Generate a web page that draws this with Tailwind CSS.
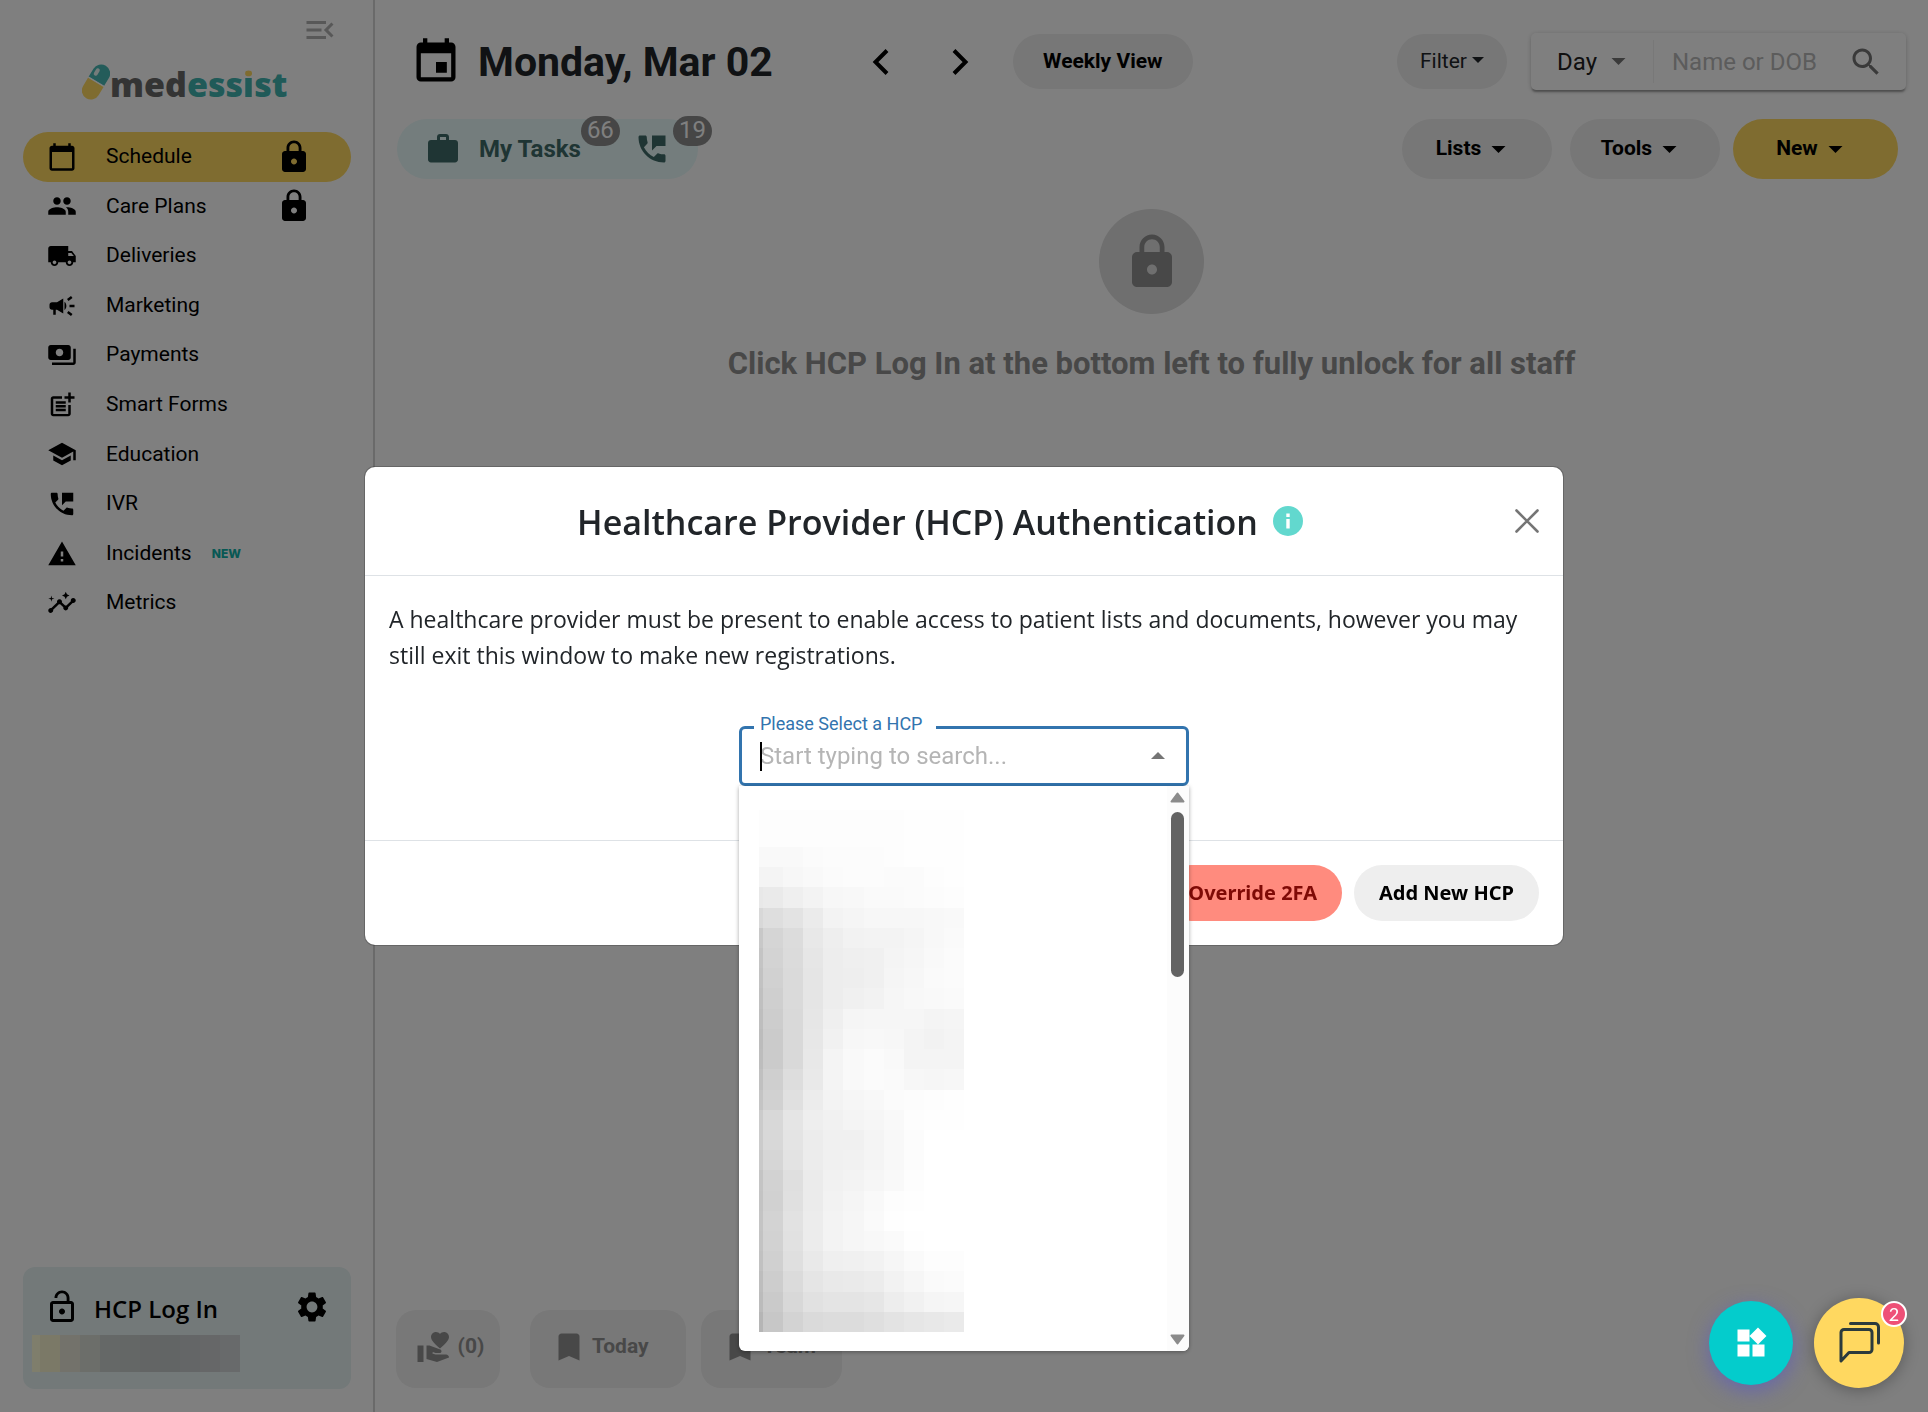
<!DOCTYPE html>
<html lang="en">
<head>
  <meta charset="UTF-8" />
  <meta name="viewport" content="width=device-width, initial-scale=1.0"/>
  <title>MedEssist - Schedule</title>
  <script src="https://cdn.jsdelivr.net/npm/@tailwindcss/browser@4"></script>
</head>
<body class="min-h-screen bg-white font-[Roboto,sans-serif] text-black">

  <!-- icon sprite -->
  <svg class="hidden" aria-hidden="true">
    <symbol id="i-menu-open" viewBox="0 0 24 24"><path d="M3 18h13v-2H3v2zm0-5h10v-2H3v2zm0-7v2h13V6H3zm18 9.59L17.42 12 21 8.41 19.59 7l-5 5 5 5L21 15.59z"/></symbol>
    <symbol id="i-calendar" viewBox="0 0 24 24"><path d="M20 3h-1V1h-2v2H7V1H5v2H4c-1.1 0-2 .9-2 2v16c0 1.1.9 2 2 2h16c1.1 0 2-.9 2-2V5c0-1.1-.9-2-2-2zm0 18H4V8h16v13z"/></symbol>
    <symbol id="i-people" viewBox="0 0 24 24"><path d="M16 11c1.66 0 2.99-1.34 2.99-3S17.66 5 16 5c-1.66 0-3 1.34-3 3s1.34 3 3 3zm-8 0c1.66 0 2.99-1.34 2.99-3S9.66 5 8 5C6.34 5 5 6.34 5 8s1.34 3 3 3zm0 2c-2.33 0-7 1.17-7 3.5V19h14v-2.5c0-2.33-4.67-3.5-7-3.5zm8 0c-.29 0-.62.02-.97.05 1.16.84 1.97 1.97 1.97 3.45V19h6v-2.5c0-2.33-4.67-3.5-7-3.5z"/></symbol>
    <symbol id="i-truck" viewBox="0 0 24 24"><path d="M20 8h-3V4H3c-1.1 0-2 .9-2 2v11h2c0 1.66 1.34 3 3 3s3-1.34 3-3h6c0 1.66 1.34 3 3 3s3-1.34 3-3h2v-5l-3-4zM6 18.5c-.83 0-1.5-.67-1.5-1.5s.67-1.5 1.5-1.5 1.5.67 1.5 1.5-.67 1.5-1.5 1.5zm13.5-9 1.96 2.5H17V9.5h2.5zm-1.5 9c-.83 0-1.5-.67-1.5-1.5s.67-1.5 1.5-1.5 1.5.67 1.5 1.5-.67 1.5-1.5 1.5z"/></symbol>
    <symbol id="i-campaign" viewBox="0 0 24 24"><path d="M18 11v2h4v-2h-4zm-2 6.61c.96.71 2.21 1.65 3.2 2.39.4-.53.8-1.07 1.2-1.6-.99-.74-2.24-1.68-3.2-2.4-.4.54-.8 1.08-1.2 1.61zM20.4 5.6c-.4-.53-.8-1.07-1.2-1.6-.99.74-2.24 1.68-3.2 2.4.4.53.8 1.07 1.2 1.6.96-.72 2.21-1.65 3.2-2.4zM4 9c-1.1 0-2 .9-2 2v2c0 1.1.9 2 2 2h1v4h2v-4h1l5 3V6L8 9H4zm11.5 3c0-1.33-.58-2.53-1.5-3.35v6.69c.92-.81 1.5-2.01 1.5-3.34z"/></symbol>
    <symbol id="i-payments" viewBox="0 0 24 24"><path d="M19 14V6c0-1.1-.9-2-2-2H3c-1.1 0-2 .9-2 2v8c0 1.1.9 2 2 2h14c1.1 0 2-.9 2-2zm-9-1c-1.66 0-3-1.34-3-3s1.34-3 3-3 3 1.34 3 3-1.34 3-3 3zm13-6v11c0 1.1-.9 2-2 2H4v-2h17V7h2z"/></symbol>
    <symbol id="i-post-add" viewBox="0 0 24 24"><path d="M17 19.22H5V7h7V5H5c-1.1 0-2 .9-2 2v12c0 1.1.9 2 2 2h12c1.1 0 2-.9 2-2v-7h-2v7.22zM19 2h-2v3h-3v2h3v3h2V7h3V5h-3V2zM7 9h8v2H7zM7 12h8v2H7zM7 15h8v2H7z"/></symbol>
    <symbol id="i-school" viewBox="0 0 24 24"><path d="M5 13.18v4L12 21l7-3.82v-4L12 17l-7-3.82zM12 3 1 9l11 6 9-4.91V17h2V9L12 3z"/></symbol>
    <symbol id="i-phone" viewBox="0 0 24 24"><path d="M20 15.5c-1.25 0-2.45-.2-3.57-.57-.35-.11-.74-.03-1.02.24l-2.2 2.2c-2.83-1.44-5.15-3.75-6.59-6.58l2.2-2.21c.28-.27.36-.66.25-1.01C8.7 6.45 8.5 5.25 8.5 4c0-.55-.45-1-1-1H4c-.55 0-1 .45-1 1 0 9.39 7.61 17 17 17 .55 0 1-.45 1-1v-3.5c0-.55-.45-1-1-1zM12 3v10l3-3h6V3h-9z"/></symbol>
    <symbol id="i-warning" viewBox="0 0 24 24"><path d="M1 21h22L12 2 1 21zm12-3h-2v-2h2v2zm0-4h-2v-4h2v4z"/></symbol>
    <symbol id="i-insights" viewBox="0 0 24 24"><path d="M21 8c-1.45 0-2.26 1.44-1.93 2.51l-3.55 3.56c-.3-.09-.74-.09-1.04 0l-2.55-2.55C12.27 10.45 11.46 9 10 9c-1.45 0-2.27 1.44-1.93 2.52l-4.56 4.55C2.44 15.74 1 16.55 1 18c0 1.1.9 2 2 2 1.45 0 2.26-1.44 1.93-2.51l4.55-4.56c.3.09.74.09 1.04 0l2.55 2.55C12.73 16.55 13.54 18 15 18c1.45 0 2.27-1.44 1.93-2.52l3.56-3.55C21.56 12.26 23 11.45 23 10c0-1.1-.9-2-2-2zM15 9l.94-2.07L18 6l-2.06-.93L15 3l-.92 2.07L12 6l2.08.93zM3.5 11 4 9l2-.5L4 8l-.5-2L3 8l-2 .5L3 9z"/></symbol>
    <symbol id="i-lock" viewBox="0 0 24 24"><path d="M18 8h-1V6c0-2.76-2.24-5-5-5S7 3.24 7 6v2H6c-1.1 0-2 .9-2 2v10c0 1.1.9 2 2 2h12c1.1 0 2-.9 2-2V10c0-1.1-.9-2-2-2zm-6 9c-1.1 0-2-.9-2-2s.9-2 2-2 2 .9 2 2-.9 2-2 2zm3.1-9H8.9V6c0-1.71 1.39-3.1 3.1-3.1 1.71 0 3.1 1.39 3.1 3.1v2z"/></symbol>
    <symbol id="i-lock-open" viewBox="0 0 24 24"><path d="M12 17c1.1 0 2-.9 2-2s-.9-2-2-2-2 .9-2 2 .9 2 2 2zm6-9h-1V6c0-2.76-2.24-5-5-5S7 3.24 7 6h1.9c0-1.71 1.39-3.1 3.1-3.1 1.71 0 3.1 1.39 3.1 3.1v2H6c-1.1 0-2 .9-2 2v10c0 1.1.9 2 2 2h12c1.1 0 2-.9 2-2V10c0-1.1-.9-2-2-2zm0 12H6V10h12v10z"/></symbol>
    <symbol id="i-settings" viewBox="0 0 24 24"><path d="M19.14 12.94c.04-.3.06-.61.06-.94 0-.32-.02-.64-.07-.94l2.03-1.58c.18-.14.23-.41.12-.61l-1.92-3.32c-.12-.22-.37-.29-.59-.22l-2.39.96c-.5-.38-1.03-.7-1.62-.94l-.36-2.54c-.04-.24-.24-.41-.48-.41h-3.84c-.24 0-.43.17-.47.41l-.36 2.54c-.59.24-1.13.57-1.62.94l-2.39-.96c-.22-.08-.47 0-.59.22L2.74 8.87c-.12.21-.08.47.12.61l2.03 1.58c-.05.3-.09.63-.09.94s.02.64.07.94l-2.03 1.58c-.18.14-.23.41-.12.61l1.92 3.32c.12.22.37.29.59.22l2.39-.96c.5.38 1.03.7 1.62.94l.36 2.54c.05.24.24.41.48.41h3.84c.24 0 .44-.17.47-.41l.36-2.54c.59-.24 1.13-.56 1.62-.94l2.39.96c.22.08.47 0 .59-.22l1.92-3.32c.12-.22.07-.47-.12-.61l-2.01-1.58zM12 15.6c-1.98 0-3.6-1.62-3.6-3.6s1.62-3.6 3.6-3.6 3.6 1.62 3.6 3.6-1.62 3.6-3.6 3.6z"/></symbol>
    <symbol id="i-event" viewBox="0 0 24 24"><path d="M17 12h-5v5h5v-5zM16 1v2H8V1H6v2H5c-1.11 0-1.99.9-1.99 2L3 19c0 1.1.89 2 2 2h14c1.1 0 2-.9 2-2V5c0-1.1-.9-2-2-2h-1V1h-2zm3 18H5V8h14v11z"/></symbol>
    <symbol id="i-work" viewBox="0 0 24 24"><path d="M20 6h-4V4c0-1.11-.89-2-2-2h-4c-1.11 0-2 .89-2 2v2H4c-1.11 0-1.99.89-1.99 2L2 19c0 1.11.89 2 2 2h16c1.11 0 2-.89 2-2V8c0-1.11-.89-2-2-2zm-6 0h-4V4h4v2z"/></symbol>
    <symbol id="i-search" viewBox="0 0 24 24"><path d="M15.5 14h-.79l-.28-.27C15.41 12.59 16 11.11 16 9.5 16 5.91 13.09 3 9.5 3S3 5.91 3 9.5 5.91 16 9.5 16c1.61 0 3.09-.59 4.23-1.57l.27.28v.79l5 4.99L20.49 19l-4.99-5zm-6 0C7.01 14 5 11.99 5 9.5S7.01 5 9.5 5 14 7.01 14 9.5 11.99 14 9.5 14z"/></symbol>
    <symbol id="i-volunteer" viewBox="0 0 24 24"><path d="M1 11h4v11H1zM16 3.25C16.65 2.49 17.66 2 18.7 2 20.55 2 22 3.45 22 5.3c0 2.27-2.91 4.9-6 7.7-3.09-2.81-6-5.44-6-7.7C10 3.45 11.45 2 13.3 2c1.04 0 2.05.49 2.7 1.25zM20 17h-7l-2.09-.73.33-.94L13 16h2.82c.65 0 1.18-.53 1.18-1.18 0-.49-.31-.93-.77-1.11L8.97 11H7v9.02L14 22l8.01-3c-.01-1.1-.9-2-2.01-2z"/></symbol>
    <symbol id="i-bookmark" viewBox="0 0 24 24"><path d="M17 3H7c-1.1 0-1.99.9-1.99 2L5 21l7-3 7 3V5c0-1.1-.9-2-2-2z"/></symbol>
    <symbol id="i-widgets" viewBox="0 0 24 24"><path d="M13 13v8h8v-8h-8zM3 21h8v-8H3v8zM3 3v8h8V3H3zm13.66-1.31L11 7.34 16.66 13l5.66-5.66-5.66-5.65z"/></symbol>
    <symbol id="i-caret" viewBox="0 0 14 7"><path d="M0 0h14L7 7z"/></symbol>
  </svg>

  <div class="flex min-h-screen">

    <!-- Sidebar -->
    <aside class="flex w-[375px] shrink-0 flex-col border-r-2 border-[#d4d4d4] pb-[23px]">
      <div class="flex justify-end pt-3 pr-[35px]">
        <button type="button" aria-label="Collapse menu"><svg class="size-9 fill-[#b0b0b0]"><use href="#i-menu-open"/></svg></button>
      </div>

      <a href="#" class="ml-[82px] flex h-[84px] items-start pt-4" aria-label="medessist">
        <svg class="h-[36px] w-[28px]" viewBox="0 0 28 36">
          <g transform="rotate(31 14 18)">
            <path d="M5 18h18v10a9 9 0 0 1-18 0z" fill="#ffd860"/>
            <path d="M5 17.4V8a9 9 0 0 1 18 0v9.400z" fill="#48b8b4"/>
            <path d="M5 17h18v1.400H5z" fill="#fff"/>
            <rect x="7.500" y="5" width="4" height="8" rx="2" fill="#e8f8f7"/>
          </g>
        </svg>
        <span class="font-['Open_Sans',sans-serif] text-[34px] leading-[40px] font-extrabold text-[#686868]">med<span class="text-[#40b4b0]">ess<span class="bg-[linear-gradient(#ffd860_38%,#40b4b0_38%)] bg-clip-text text-transparent">i</span>st</span></span>
      </a>

      <nav class="mx-[23px] mr-[22px] grid h-[496px] auto-rows-fr text-[21px]">
        <a href="#" class="flex items-center rounded-full bg-[#ffd860] pr-[39px] pl-6">
          <svg class="size-[30px]"><use href="#i-calendar"/></svg><span class="ml-[29px]">Schedule</span>
          <svg class="ml-auto size-9"><use href="#i-lock"/></svg>
        </a>
        <a href="#" class="flex items-center pr-[39px] pl-6">
          <svg class="size-[30px]"><use href="#i-people"/></svg><span class="ml-[29px]">Care Plans</span>
          <svg class="ml-auto size-9"><use href="#i-lock"/></svg>
        </a>
        <a href="#" class="flex items-center pl-6"><svg class="size-[30px]"><use href="#i-truck"/></svg><span class="ml-[29px]">Deliveries</span></a>
        <a href="#" class="flex items-center pl-6"><svg class="size-[30px]"><use href="#i-campaign"/></svg><span class="ml-[29px]">Marketing</span></a>
        <a href="#" class="flex items-center pl-6"><svg class="size-[30px]"><use href="#i-payments"/></svg><span class="ml-[29px]">Payments</span></a>
        <a href="#" class="flex items-center pl-6"><svg class="size-[30px]"><use href="#i-post-add"/></svg><span class="ml-[29px]">Smart Forms</span></a>
        <a href="#" class="flex items-center pl-6"><svg class="size-[30px]"><use href="#i-school"/></svg><span class="ml-[29px]">Education</span></a>
        <a href="#" class="flex items-center pl-6"><svg class="size-[30px]"><use href="#i-phone"/></svg><span class="ml-[29px]">IVR</span></a>
        <a href="#" class="flex items-center pl-6">
          <svg class="size-[30px]"><use href="#i-warning"/></svg><span class="ml-[29px]">Incidents</span>
          <span class="ml-5 font-[Inter,sans-serif] text-[12px] font-extrabold text-[#10b0a8]">NEW</span>
        </a>
        <a href="#" class="flex items-center pl-6"><svg class="size-[30px]"><use href="#i-insights"/></svg><span class="ml-[29px]">Metrics</span></a>
      </nav>

      <div class="mx-[23px] mr-[22px] mt-auto h-[122px] rounded-xl bg-[#e6f2f3] pt-[22px]">
        <div class="flex h-9 items-center pr-[21px] pl-[21px]">
          <svg class="size-9"><use href="#i-lock-open"/></svg>
          <button type="button" class="ml-[14px] pt-1 font-['Open_Sans',sans-serif] text-[24px] font-semibold">HCP Log In</button>
          <button type="button" class="ml-auto" aria-label="Settings"><svg class="size-9"><use href="#i-settings"/></svg></button>
        </div>
        <div id="hcp-name" class="mt-[10px] ml-[9px] grid h-[37px] w-[208px] grid-cols-[8px_repeat(10,minmax(0,1fr))]"></div>
      </div>
    </aside>

    <!-- Schedule -->
    <main class="flex min-w-0 flex-1 flex-col pt-[33px] pb-6">
      <div class="flex h-[57px] items-center pr-[22px] pl-[35px]">
        <svg class="size-[52px]"><use href="#i-event"/></svg>
        <h1 class="ml-4 text-[41px] leading-[48px] font-bold text-[#212529]">Monday, Mar 02</h1>
        <button type="button" class="ml-[88px] flex w-10 justify-center" aria-label="Previous day">
          <svg class="h-[26px] w-[17px]" viewBox="0 0 17 26"><path d="M15 1.500 3.500 13 15 24.500" fill="none" stroke="#000" stroke-width="4"/></svg>
        </button>
        <button type="button" class="ml-10 flex w-10 justify-center" aria-label="Next day">
          <svg class="h-[26px] w-[17px]" viewBox="0 0 17 26"><path d="M2 1.500 13.500 13 2 24.500" fill="none" stroke="#000" stroke-width="4"/></svg>
        </button>
        <button type="button" class="ml-8 h-[55px] w-[180px] rounded-full bg-[#eee] text-[21px] font-bold">Weekly View</button>

        <button type="button" class="ml-auto flex h-[55px] w-[110px] items-center justify-center gap-[5px] rounded-full bg-[#eee] text-[21px] text-[#212529]">Filter <svg class="-mt-1 h-[6px] w-3 fill-current"><use href="#i-caret"/></svg></button>
        <div class="ml-6 flex h-[57px] w-[375px] items-center rounded-[5px] bg-white pr-[22px] pl-[26px] shadow-[0_3px_2px_-1px_rgba(0,0,0,0.3),0_1px_5px_rgba(0,0,0,0.2)]">
          <select aria-label="View" class="w-[54px] appearance-none bg-transparent text-[24px] text-[#212121]"><option>Day</option></select>
          <svg class="h-[7px] w-[15px] fill-[#757575]"><use href="#i-caret"/></svg>
          <span class="ml-[27px] h-[43px] w-px bg-[#f0f0f0]"></span>
          <input type="search" aria-label="Search patients" placeholder="Name or DOB" class="ml-[18px] min-w-0 flex-1 bg-transparent text-[24px] outline-none placeholder:text-[#b8b8b8]" />
          <button type="button" class="shrink-0" aria-label="Search"><svg class="size-9 fill-[#757575]"><use href="#i-search"/></svg></button>
        </div>
      </div>

      <div class="mt-[29px] flex h-[60px] items-center pr-[30px] pl-[22px] text-[21px] font-bold">
        <div class="flex h-[60px] w-[301px] items-center justify-between rounded-full bg-[#e8fafa] pr-7 pl-7 text-[#3f6b68]">
          <button type="button" class="relative flex items-center gap-[18px] text-[24px]">
            <svg class="size-9 fill-current"><use href="#i-work"/></svg>My Tasks
            <span class="absolute -top-[15px] -right-[39px] h-[30px] w-[39px] rounded-full bg-[#8c8c8c] text-center text-[24px] leading-[28px] font-normal text-white">66</span>
          </button>
          <button type="button" class="relative" aria-label="Phone messages">
            <svg class="size-9 fill-current"><use href="#i-phone"/></svg>
            <span class="absolute -top-[15px] -right-[42px] h-[30px] w-[39px] rounded-full bg-[#8c8c8c] text-center text-[24px] leading-[28px] font-normal text-white">19</span>
          </button>
        </div>
        <button type="button" class="ml-auto flex h-[60px] w-[150px] items-center justify-center gap-[10px] rounded-full bg-[#eee] pr-3">Lists <svg class="h-[7px] w-[15px]"><use href="#i-caret"/></svg></button>
        <button type="button" class="ml-[18px] flex h-[60px] w-[150px] items-center justify-center gap-[10px] rounded-full bg-[#eee] pr-3">Tools <svg class="h-[7px] w-[15px]"><use href="#i-caret"/></svg></button>
        <button type="button" class="ml-[13px] flex h-[60px] w-[165px] items-center justify-center gap-[10px] rounded-full bg-[#ffd860] pr-3">New <svg class="h-[7px] w-[15px]"><use href="#i-caret"/></svg></button>
      </div>

      <div class="mt-[30px] flex flex-col items-center text-[#909090]">
        <div class="flex size-[105px] items-center justify-center rounded-full bg-[#dedede]"><svg class="size-[60px] fill-current"><use href="#i-lock"/></svg></div>
        <p class="mt-[30px] text-[31px] leading-[40px] font-bold">Click HCP Log In at the bottom left to fully unlock for all staff</p>
      </div>

      <div class="mt-auto flex pl-[21px] text-[21px] font-bold text-[#909090]">
        <button type="button" class="flex h-[78px] w-[104px] items-center justify-center gap-[6px] rounded-[20px] bg-[#f0f0f0] pb-1 pl-1"><svg class="size-9 fill-current"><use href="#i-volunteer"/></svg>(0)</button>
        <button type="button" class="ml-[30px] flex h-[78px] w-[156px] items-center rounded-[20px] bg-[#f0f0f0] pb-1 pl-[21px]"><svg class="size-9 fill-current"><use href="#i-bookmark"/></svg><span class="ml-[5px]">Today</span></button>
        <button type="button" class="ml-[15px] flex h-[78px] w-[141px] items-center rounded-[20px] bg-[#f0f0f0] pb-1 pl-[21px]"><svg class="size-9 fill-current"><use href="#i-bookmark"/></svg><span class="ml-[5px]">Team</span></button>
      </div>
    </main>
  </div>

  <!-- HCP authentication dialog -->
  <div class="fixed inset-0 flex items-center justify-center bg-black/50">
    <div role="dialog" aria-labelledby="hcp-title" class="w-full max-w-[1198px] rounded-[10px] bg-white font-['Open_Sans',sans-serif] text-[#212529] shadow-[0_0_0_1px_rgba(0,0,0,0.2)]">
      <div class="flex h-[109px] items-center border-b border-[#dee2e6] pr-6 pl-6">
        <div class="flex flex-1 items-center justify-center gap-[15px] pr-6">
          <h2 id="hcp-title" class="pt-[2px] text-[34px] leading-[44px] font-semibold">Healthcare Provider (HCP) Authentication</h2>
          <svg class="size-[30px]" viewBox="0 0 30 30"><circle cx="15" cy="15" r="15" fill="#62d8ce"/><path d="M13.300 13h3.400v9.500h-3.400zM13.300 7.500h3.400v3.400h-3.400z" fill="#fff"/></svg>
        </div>
        <button type="button" aria-label="Close">
          <svg class="size-6" viewBox="0 0 24 24"><path d="M1.500 1.500l21 21M22.500 1.500l-21 21" stroke="#757575" stroke-width="2.600" stroke-linecap="round"/></svg>
        </button>
      </div>

      <div class="px-6 pt-[25px] pb-[54px]">
        <p class="text-[23px] leading-[36px]">A healthcare provider must be present to enable access to patient lists and documents, however you may still exit this window to make new registrations.</p>

        <div class="relative mx-auto mt-[53px] h-[60px] w-[450px] font-[Roboto,sans-serif]">
          <label for="hcp" class="absolute -top-[14px] left-[15px] bg-white pr-[14px] pl-[6px] text-[18px] leading-6 text-[#3274ae]">Please Select a HCP</label>
          <input id="hcp" type="text" placeholder="Start typing to search..." class="h-full w-full rounded-[6px] border-[3px] border-[#3274ae] pr-14 pl-[18px] text-[24px] outline-none placeholder:text-[#b5b5b5]" />
          <span class="absolute top-4 left-[21px] h-[29px] w-[2px] bg-black"></span>
          <svg class="absolute top-[26px] right-6 h-[7px] w-[14px] rotate-180 fill-[#757575]"><use href="#i-caret"/></svg>

          <!-- provider list -->
          <div class="absolute top-full left-0 z-10 flex h-[565px] w-full rounded-b-[6px] bg-white shadow-[0_1px_4px_rgba(0,0,0,0.35)]">
            <div id="provider-names" class="mt-6 ml-5 grid h-[522px] w-[205px] grid-cols-[4px_repeat(10,minmax(0,1fr))] grid-rows-[37px_repeat(24,minmax(0,1fr))]"></div>
            <div class="ml-auto flex w-[22px] flex-col items-center rounded-br-[6px] bg-[#fcfcfc] pt-[6px] pr-[2px] pb-[6px]">
              <svg class="h-[11px] w-[15px]" viewBox="0 0 15 11"><path d="M7.500 1.500 13.500 9.500h-12z" fill="#8b8b8b" stroke="#8b8b8b" stroke-width="2" stroke-linejoin="round"/></svg>
              <div class="mt-[9px] h-[165px] w-[13px] rounded-full bg-[#636363]"></div>
              <svg class="mt-auto h-[11px] w-[15px]" viewBox="0 0 15 11"><path d="M7.500 9.500 13.500 1.500h-12z" fill="#8b8b8b" stroke="#8b8b8b" stroke-width="2" stroke-linejoin="round"/></svg>
            </div>
          </div>
        </div>
      </div>

      <div class="flex h-[105px] items-center justify-end gap-3 border-t border-[#dee2e6] pr-6 font-['Noto_Sans',sans-serif] text-[20px] font-bold">
        <button type="button" class="h-14 rounded-full bg-[#ff8b7e] px-[25px] text-[#7f0a06]">Override 2FA</button>
        <button type="button" class="h-14 rounded-full bg-[#eee] px-[25px] text-black">Add New HCP</button>
      </div>
    </div>
  </div>

  <!-- Floating buttons -->
  <div class="fixed right-6 bottom-6 flex items-center gap-[21px]">
    <button type="button" aria-label="Apps" class="flex size-[84px] items-center justify-center rounded-full bg-[#04cccc] shadow-[0_6px_20px_rgba(80,80,220,0.5)]"><svg class="size-9 fill-white"><use href="#i-widgets"/></svg></button>
    <button type="button" aria-label="Chat" class="relative flex size-[90px] items-center justify-center rounded-full bg-[#ffd860] shadow-[0_2px_16px_rgba(0,0,0,0.3)]">
      <svg class="size-[42px]" viewBox="0 0 42 42" fill="none" stroke="#2b3a3c" stroke-width="3" stroke-linejoin="round" stroke-linecap="round">
        <path d="M3 39V10.500a3 3 0 0 1 3-3h25a3 3 0 0 1 3 3v17a3 3 0 0 1-3 3H11z"/>
        <path d="M12.500 1.500H37a3.500 3.500 0 0 1 3.500 3.500v16"/>
      </svg>
      <span class="absolute top-[3px] -right-[3px] flex size-[26px] items-center justify-center rounded-full border-2 border-white bg-[#ee5077] font-[Lato,sans-serif] text-[18px] leading-none text-white">2</span>
    </button>
  </div>

  <script>
    // redacted names are drawn as a coarse mosaic, one colour per cell
    const HCP_NAME = ["fffcd8", "f6f3cf", "e6e5d6", "d8dcd4", "cbd1ce", "c8cecd", "c6cbca", "c4cacb", "c8cdce", "cccfd1", "d0d4d6"];

    const PROVIDERS = [
      "fd fd fd fd fd fd fd fd fe fe fe",
      "f9 f9 f9 fb fc fc fc fd fe fe fe",
      "f4 f4 f7 f9 fb fc fc fb fb fd fe",
      "e8 ea ef f3 f7 f8 fa fa fb fc fd",
      "d8 de e3 eb f3 f5 f7 f7 f7 f8 f9",
      "c8 d5 dc e8 ee f2 f3 f3 f5 f8 fa",
      "c4 d3 db e6 ed ef f0 f4 f6 f9 fb",
      "c2 d1 da e5 ed ee f0 f5 f7 fa fb",
      "c0 cf da e5 ed f0 f2 f6 f8 f9 fa",
      "be cd d9 e6 ef f5 f6 f6 f6 f4 f5",
      "bc cb d9 e7 f1 f7 f8 f7 f4 f2 f4",
      "bd cb d9 e8 f4 f9 fb f9 f4 f4 f4",
      "c0 cf dd e9 f4 f9 fb fa f7 f6 f7",
      "c4 d1 e0 ec f3 f6 f8 fb fc fd fe",
      "cb d8 e5 ee f1 f4 f6 f9 fd fe fe",
      "cb d8 e4 ec f0 f0 f4 f8 fc ff ff",
      "c9 d6 e3 ec f0 f1 f4 f8 fc ff ff",
      "c4 d2 df eb f1 f3 f6 f9 fd ff ff",
      "c3 d1 e0 eb f2 f5 f9 fd fe ff ff",
      "c4 d3 e2 ec f3 f6 fa fe ff ff ff",
      "c3 d2 e1 ec f3 f6 f8 fa fe ff ff",
      "c1 d0 df e9 ef f0 f2 f6 fa fd fd",
      "bd cd db e5 e9 ea ec f2 f6 fa fb",
      "bb ca d8 e1 e4 e4 e6 ed f1 f5 f6",
      "b5 c7 d3 da dc dc df e3 e6 e8 ea"
    ];

    function fillCells(id, colors) {
      const box = document.getElementById(id);
      colors.forEach((color) => {
        const cell = document.createElement("span");
        cell.style.background = "#" + color;
        box.appendChild(cell);
      });
    }

    fillCells("hcp-name", HCP_NAME);
    fillCells("provider-names", PROVIDERS.join(" ").split(" ").map((v) => v + v + v));
  </script>
</body>
</html>
